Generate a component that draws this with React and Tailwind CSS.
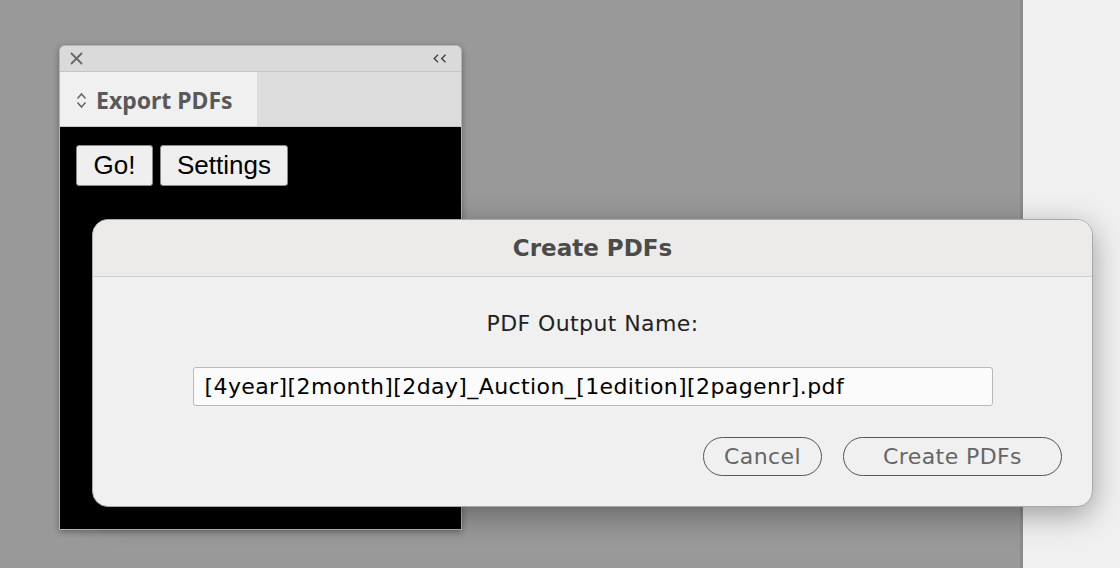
function Panel() {
  return (
    <div className="absolute left-[59px] top-[45px] w-[403px] h-[485px] flex flex-col rounded-t-[6px] border border-[#b4b4b4] bg-[#d9d9d9] shadow-[0_2px_6px_rgba(0,0,0,0.35)] overflow-hidden">
      {/* title bar */}
      <div className="h-[26px] flex items-center justify-between pl-[10px] pr-[14px] bg-[#dadada] border-b border-[#c6c6c6]">
        <svg width="13" height="13" viewBox="0 0 13 13" stroke="#686868" strokeWidth="1.8" strokeLinecap="round">
          <path d="M1.5 1.5 L11.5 11.5 M11.5 1.5 L1.5 11.5" />
        </svg>
        <svg width="14" height="9" viewBox="0 0 14 9" fill="none" stroke="#444" strokeWidth="1.4">
          <path d="M5 0.8 L1.2 4.5 L5 8.2" />
          <path d="M12.5 0.8 L8.7 4.5 L12.5 8.2" />
        </svg>
      </div>
      {/* tab row */}
      <div className="h-[55px] flex bg-[#dcdcdc] border-b border-[#c8c8c8]">
        <div className="w-[197px] bg-[#f0f0f0] flex items-center gap-[9px] pl-[16px] pt-[3px]">
          <svg width="11" height="17" viewBox="0 0 11 17" fill="none" stroke="#666" strokeWidth="1.5">
            <path d="M1.5 6.5 L5.5 2 L9.5 6.5" />
            <path d="M1.5 10.5 L5.5 15 L9.5 10.5" />
          </svg>
          <span className="text-[23px] font-bold text-[#595959] font-['Noto_Sans',sans-serif]">Export PDFs</span>
        </div>
      </div>
      {/* content */}
      <div className="flex-1 bg-black pt-[18px] pl-[16px] flex items-start gap-[7px]">
        <button className="h-[41px] w-[77px] bg-[#efefef] border border-[#8a8a8a] rounded-[3px] text-[26px] text-black font-['Liberation_Sans',sans-serif] flex items-center justify-center">Go!</button>
        <button className="h-[41px] w-[128px] bg-[#efefef] border border-[#8a8a8a] rounded-[3px] text-[26px] text-black font-['Liberation_Sans',sans-serif] flex items-center justify-center">Settings</button>
      </div>
    </div>
  );
}

function Dialog() {
  return (
    <div className="absolute left-[92px] top-[219px] w-[1001px] h-[288px] rounded-[16px] bg-[#f0f0f0] border border-[#a9a9a9] shadow-[0_8px_30px_rgba(0,0,0,0.35)] overflow-hidden flex flex-col font-['DejaVu_Sans',sans-serif]">
      <div className="h-[57px] bg-[#ecebe9] border-b border-[#cfcfcf] flex items-center justify-center">
        <span className="text-[23px] font-bold text-[#4b4b4b]">Create PDFs</span>
      </div>
      <div className="flex-1 flex flex-col items-center">
        <div className="mt-[30px] text-[22px] tracking-[0.4px] text-[#222]">PDF Output Name:</div>
        <div className="mt-[27px] w-[800px] h-[39px] bg-[#fbfbfb] border border-[#b9b9b9] rounded-[3px] flex items-center pl-[11px] text-[22px] tracking-[0.4px] text-black">
          [4year][2month][2day]_Auction_[1edition][2pagenr].pdf
        </div>
        <div className="self-end mr-[30px] mt-[31px] flex gap-[21px]">
          <button className="h-[39px] w-[119px] rounded-full border-[1.5px] border-[#555] text-[22px] tracking-[0.4px] text-[#666] flex items-center justify-center">Cancel</button>
          <button className="h-[39px] w-[219px] rounded-full border-[1.5px] border-[#555] text-[22px] tracking-[0.4px] text-[#666] flex items-center justify-center">Create PDFs</button>
        </div>
      </div>
    </div>
  );
}

export default function App() {
  return (
    <div className="w-[1120px] h-[568px] flex overflow-hidden">
      <div className="relative flex-1 bg-[#999999] border-r-[3px] border-[#8c8c8c]">
        <Panel />
        <Dialog />
      </div>
      <div className="w-[97px] bg-[#f0f0f0]" />
    </div>
  );
}
